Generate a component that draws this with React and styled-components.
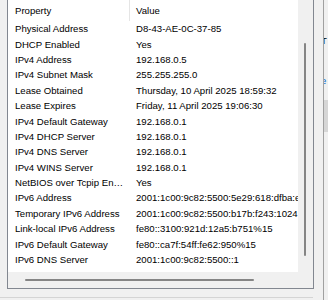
import React from "react";
import styled, { createGlobalStyle } from "styled-components";

const Global = createGlobalStyle`
  html, body { margin: 0; padding: 0; background: #f0f0f0; }
  body { font-family: "Liberation Sans", Arial, sans-serif; }
`;

const Page = styled.div`
  width: 328px;
  height: 300px;
  overflow: hidden;
  display: flex;
  background: #f0f0f0;
`;

const LeftPane = styled.div`
  width: 323px;
  flex: none;
  display: flex;
  flex-direction: column;
`;

const ListFrame = styled.div`
  margin: -1px 0 0 7px;
  width: 307px;
  height: 290px;
  box-sizing: border-box;
  border: 1px solid #828790;
  display: grid;
  grid-template-columns: 290px 15px;
  grid-template-rows: 272px 16px;
  background: #f0f0f0;
`;

const Client = styled.div`
  background: #fff;
  overflow: hidden;
  font-size: 9.6px;
  color: #000;
`;

const HeaderRow = styled.div`
  display: flex;
  height: 21px;
  align-items: stretch;
`;

const HeadCell = styled.div`
  flex: none;
  width: ${(p) => p.$w}px;
  box-sizing: border-box;
  padding-left: ${(p) => p.$pad}px;
  display: flex;
  align-items: center;
  border-right: ${(p) => (p.$sep ? "1px solid #e5e5e5" : "none")};
`;

const Row = styled.div`
  display: flex;
  height: 15.4px;
  align-items: center;
  white-space: nowrap;
`;

const Cell = styled.div`
  flex: none;
  width: ${(p) => p.$w}px;
  box-sizing: border-box;
  padding-left: ${(p) => p.$pad}px;
  padding-right: ${(p) => (p.$ellipsis ? 4 : 0)}px;
  overflow: hidden;
  text-overflow: ${(p) => (p.$ellipsis ? "ellipsis" : "clip")};
  white-space: nowrap;
`;

const VScroll = styled.div`
  background: #f0f0f0;
  display: flex;
  justify-content: center;
  padding-top: 43px;
`;

const VThumb = styled.div`
  width: 2px;
  height: 213px;
  background: #858585;
  border-radius: 1px;
  margin-left: -2px;
`;

const HScroll = styled.div`
  background: #f0f0f0;
  display: flex;
  align-items: center;
  padding-left: 17px;
`;

const HThumb = styled.div`
  width: 229px;
  height: 2px;
  background: #858585;
  border-radius: 1px;
`;

const Corner = styled.div`
  background: #f0f0f0;
`;

const BottomEdge = styled.div`
  margin-top: 8px;
  width: 313px;
  height: 1px;
  background: #d4d4d4;
`;

const RightPane = styled.div`
  flex: 1;
  border-left: 1px solid #a0a0a0;
  background: #f0f0f0;
  display: flex;
  flex-direction: column;
  overflow: hidden;
  font-size: 9.6px;
  white-space: nowrap;
`;

const Fragment = styled.div`
  margin-top: ${(p) => p.$top}px;
  margin-left: -3px;
  height: 12px;
  line-height: 12px;
  color: ${(p) => p.$color};
`;

const GreyBlock = styled.div`
  margin-top: 13px;
  height: 32px;
  background: #d6d6d6;
`;

const rows = [
  ["Physical Address", "D8-43-AE-0C-37-85"],
  ["DHCP Enabled", "Yes"],
  ["IPv4 Address", "192.168.0.5"],
  ["IPv4 Subnet Mask", "255.255.255.0"],
  ["Lease Obtained", "Thursday, 10 April 2025 18:59:32"],
  ["Lease Expires", "Friday, 11 April 2025 19:06:30"],
  ["IPv4 Default Gateway", "192.168.0.1"],
  ["IPv4 DHCP Server", "192.168.0.1"],
  ["IPv4 DNS Server", "192.168.0.1"],
  ["IPv4 WINS Server", "192.168.0.1"],
  ["NetBIOS over Tcpip Enabled", "Yes"],
  ["IPv6 Address", "2001:1c00:9c82:5500:5e29:618:dfba:e3c1"],
  ["Temporary IPv6 Address", "2001:1c00:9c82:5500:b17b:f243:1024:8c2e"],
  ["Link-local IPv6 Address", "fe80::3100:921d:12a5:b751%15"],
  ["IPv6 Default Gateway", "fe80::ca7f:54ff:fe62:950%15"],
  ["IPv6 DNS Server", "2001:1c00:9c82:5500::1"],
];

export default function App() {
  return (
    <>
      <Global />
      <Page>
        <LeftPane>
          <ListFrame>
            <Client>
              <HeaderRow>
                <HeadCell $w={122} $pad={7} $sep>
                  Property
                </HeadCell>
                <HeadCell $w={168} $pad={6}>
                  Value
                </HeadCell>
              </HeaderRow>
              {rows.map(([k, v]) => (
                <Row key={k}>
                  <Cell $w={122} $pad={7} $ellipsis>
                    {k}
                  </Cell>
                  <Cell $w={168} $pad={6}>
                    {v}
                  </Cell>
                </Row>
              ))}
            </Client>
            <VScroll>
              <VThumb />
            </VScroll>
            <HScroll>
              <HThumb />
            </HScroll>
            <Corner />
          </ListFrame>
          <BottomEdge />
        </LeftPane>
        <RightPane>
          <Fragment $top={35} $color="#000">T</Fragment>
          <Fragment $top={28} $color="#0066cc">e</Fragment>
          <GreyBlock />
        </RightPane>
      </Page>
    </>
  );
}
